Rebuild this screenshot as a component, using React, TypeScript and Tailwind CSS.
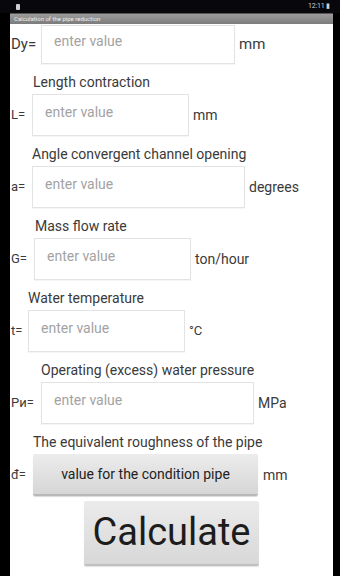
import React from "react";

const font = { fontFamily: "Roboto, 'Noto Sans', sans-serif" };

function Header({ text, ml }: { text: string; ml: string }) {
  return (
    <div className={`mt-[9px] h-[18px] leading-[18px] text-[14px] text-[#3a3a3a] whitespace-nowrap ${ml}`}>{text}</div>
  );
}

function InputRow({
  label,
  labelW,
  labelCls,
  inputW,
  unit,
  unitCls,
  h,
  mt,
  pt,
}: {
  label: string;
  labelW: string;
  labelCls: string;
  inputW: string;
  unit: string;
  unitCls: string;
  h: string;
  mt: string;
  pt: string;
}) {
  return (
    <div className={`flex items-center ${mt}`}>
      <div className={`${labelW} pl-[1px] text-[#3a3a3a] whitespace-nowrap ${labelCls}`}>{label}</div>
      <div className={`${inputW} ${h} ${pt} border border-[#e3e3e3] bg-white pl-[12px] text-[14px] text-[#a3a3a3] shadow-[0_1px_1px_rgba(0,0,0,0.04)]`}>
        enter value
      </div>
      <div className={`ml-[4px] text-[#3a3a3a] whitespace-nowrap ${unitCls}`}>{unit}</div>
    </div>
  );
}

export default function App() {
  return (
    <div className="w-[340px] h-[576px] bg-black flex flex-col overflow-hidden" style={font}>
      <div className="h-[13px] flex items-center justify-between pl-[16px] pr-[10px] bg-[#08080c]">
        <div className="w-[4px] h-[6px] bg-[#cfcfcf] rounded-[1px]" />
        <div className="text-[7px] leading-none text-[#d0d0d0] tracking-tight">12:11 ▮</div>
      </div>
      <div className="ml-[10px] w-[323px] flex-1 flex flex-col">
        <div className="h-[11px] bg-gradient-to-b from-[#9c9c9c] to-[#7c7c7c] border-t border-[#555] flex items-center pl-[4px]">
          <span className="text-[6px] leading-none text-[#eeeeee] whitespace-nowrap">Calculation of the pipe reduction</span>
        </div>
        <div className="flex-1 bg-white flex flex-col">
          <InputRow label="Dy=" labelW="w-[31px]" labelCls="text-[15px]" inputW="w-[194px]" h="h-[39px]" pt="pt-[5px]" mt="mt-[1px]" unit="mm" unitCls="text-[15px]" />

          <Header text="Length contraction" ml="ml-[23px]" />
          <InputRow label="L=" labelW="w-[22px]" labelCls="text-[13px]" inputW="w-[157px]" h="h-[42px]" pt="pt-[7px]" mt="mt-[3px]" unit="mm" unitCls="text-[14px]" />

          <Header text="Angle convergent channel opening" ml="ml-[22px]" />
          <InputRow label="a=" labelW="w-[22px]" labelCls="text-[13px]" inputW="w-[213px]" h="h-[42px]" pt="pt-[7px]" mt="mt-[3px]" unit="degrees" unitCls="text-[14px]" />

          <Header text="Mass flow rate" ml="ml-[25px]" />
          <InputRow label="G=" labelW="w-[24px]" labelCls="text-[13px]" inputW="w-[157px]" h="h-[42px]" pt="pt-[7px]" mt="mt-[3px]" unit="ton/hour" unitCls="text-[14px]" />

          <Header text="Water temperature" ml="ml-[18px]" />
          <InputRow label="t=" labelW="w-[18px]" labelCls="text-[13px]" inputW="w-[157px]" h="h-[42px]" pt="pt-[7px]" mt="mt-[3px]" unit="°C" unitCls="text-[13px]" />

          <Header text="Operating (excess) water pressure" ml="ml-[31px]" />
          <InputRow label="Ри=" labelW="w-[31px]" labelCls="text-[13px]" inputW="w-[213px]" h="h-[42px]" pt="pt-[7px]" mt="mt-[3px]" unit="MPa" unitCls="text-[14px]" />

          <Header text="The equivalent roughness of the pipe" ml="ml-[23px]" />
          <div className="flex items-center mt-[3px]">
            <div className="w-[23px] pl-[1px] text-[13px] text-[#3a3a3a]">đ=</div>
            <div className="w-[225px] h-[42px] rounded-[2px] bg-gradient-to-b from-[#ececec] to-[#d6d6d6] border-b-2 border-[#b8b8b8] shadow-[0_1px_1px_rgba(0,0,0,0.15)] flex items-center justify-center text-[14px] text-[#222] whitespace-nowrap">
              value for the condition pipe
            </div>
            <div className="ml-[5px] text-[14px] text-[#3a3a3a]">mm</div>
          </div>

          <div className="mt-[5px] ml-[74px] w-[175px] h-[65px] rounded-[2px] bg-gradient-to-b from-[#ebebeb] to-[#d8d8d8] border-b-2 border-[#c0c0c0] shadow-[0_1px_1px_rgba(0,0,0,0.12)] flex items-center justify-center text-[38px] text-[#1c1c1c]">
            Calculate
          </div>
        </div>
      </div>
    </div>
  );
}
